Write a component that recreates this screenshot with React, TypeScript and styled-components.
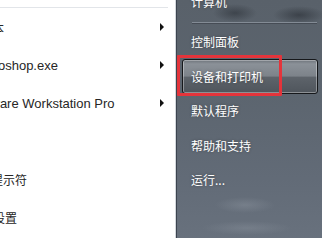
import React from "react";
import styled, { createGlobalStyle, css } from "styled-components";

const Global = createGlobalStyle`
  html, body { margin: 0; padding: 0; background: #fff; overflow: hidden; }
  #root { width: 322px; height: 238px; }
`;

const Menu = styled.div`
  position: relative;
  display: flex;
  width: 322px;
  height: 238px;
  overflow: hidden;
  font-family: "Liberation Sans", "Noto Sans CJK SC", sans-serif;
`;

const LeftPane = styled.div`
  width: 175px;
  flex: none;
  background: #ffffff;
  border-right: 1px solid #d3d7dc;
  overflow: hidden;
  display: flex;
  flex-direction: column;
`;

const TopRule = styled.div`
  height: 1px;
  width: 168px;
  margin-top: 7px;
  background: #e2e5e9;
`;

const LeftItem = styled.div`
  height: 38px;
  flex: none;
  display: flex;
  align-items: center;
`;

const LeftLabel = styled.span<{ $shift: number; $latin?: boolean }>`
  margin-left: ${(p) => p.$shift}px;
  white-space: nowrap;
  color: #262626;
  font-size: ${(p) => (p.$latin ? "13px" : "12px")};
  ${(p) =>
    p.$latin
      ? css`font-family: "Liberation Sans", sans-serif;`
      : css`font-family: "Noto Sans CJK SC", sans-serif;`}
`;

const Arrow = styled.span`
  margin-left: auto;
  margin-right: 11px;
  width: 0;
  height: 0;
  border-left: 4px solid #111;
  border-top: 4px solid transparent;
  border-bottom: 4px solid transparent;
`;

const RightPane = styled.div`
  flex: 1;
  border-left: 1px solid #3c444f;
  display: flex;
  flex-direction: column;
  background:
    radial-gradient(ellipse 22px 9px at 58px 13px, rgba(40, 45, 52, 0.55), transparent),
    radial-gradient(ellipse 26px 9px at 122px 15px, rgba(40, 45, 52, 0.6), transparent),
    radial-gradient(ellipse 30px 8px at 68px 205px, rgba(150, 158, 168, 0.35), transparent),
    radial-gradient(ellipse 45px 7px at 70px 228px, rgba(150, 158, 168, 0.3), transparent),
    linear-gradient(to bottom, #59616a 0%, #5c656f 40%, #626b77 75%, #68717d 100%);
`;

const RightItem = styled.div<{ $active?: boolean; $first?: boolean }>`
  height: 34.5px;
  flex: none;
  box-sizing: border-box;
  margin: ${(p) => (p.$first ? "-16px" : "0")} 4px 0 5px;
  padding-left: 8px;
  display: flex;
  align-items: center;
  border: 1px solid transparent;
  border-radius: 3px;
  color: #ffffff;
  font-family: "Noto Sans CJK SC", sans-serif;
  font-size: 12px;
  text-shadow: 0 0 3px rgba(0, 0, 0, 0.35);
  ${(p) =>
    p.$active &&
    css`
      border-color: #16181b;
      box-shadow: inset 0 0 0 1px rgba(255, 255, 255, 0.35);
      background: linear-gradient(
        to bottom,
        #6d737a 0%,
        #8b9198 12%,
        #7d838a 48%,
        #5d636a 53%,
        #4f555c 100%
      );
    `}
`;

const RightRule = styled.div`
  height: 1px;
  margin: 3px 5px 2px 15px;
  background: #838b95;
  box-shadow: 0 1px 0 rgba(40, 45, 52, 0.4);
`;

const Annotation = styled.div`
  position: absolute;
  left: 177px;
  top: 55px;
  width: 105px;
  height: 41px;
  box-sizing: border-box;
  border: 3px solid #e4343b;
  border-radius: 1px;
  pointer-events: none;
`;

const leftItems: { text: string; shift: number; latin?: boolean; arrow?: boolean }[] = [
  { text: "记事本", shift: -32, arrow: true },
  { text: "Adobe Photoshop.exe", shift: -70, latin: true, arrow: true },
  { text: "VMware Workstation Pro", shift: -29, latin: true, arrow: true },
  { text: "", shift: 0 },
  { text: "命令提示符", shift: -33 },
  { text: "默认设置", shift: -31 },
];

const rightItems = ["控制面板", "设备和打印机", "默认程序", "帮助和支持", "运行..."];

export default function App() {
  return (
    <>
      <Global />
      <Menu>
        <LeftPane>
          <TopRule />
          {leftItems.map((it, i) => (
            <LeftItem key={i}>
              <LeftLabel $shift={it.shift} $latin={it.latin}>
                {it.text}
              </LeftLabel>
              {it.arrow && <Arrow />}
            </LeftItem>
          ))}
        </LeftPane>
        <RightPane>
          <RightItem $first>计算机</RightItem>
          <RightRule />
          {rightItems.map((t) => (
            <RightItem key={t} $active={t === "设备和打印机"}>
              {t}
            </RightItem>
          ))}
        </RightPane>
        <Annotation />
      </Menu>
    </>
  );
}
